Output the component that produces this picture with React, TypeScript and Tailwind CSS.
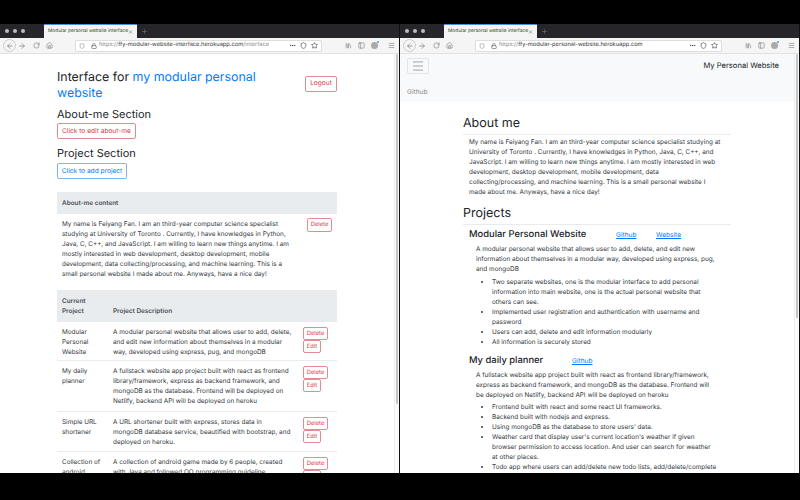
import type { ReactNode } from "react";
import {
  ArrowLeftIcon,
  ArrowRightIcon,
  EllipsisIcon,
  HouseIcon,
  LibraryIcon,
  LockIcon,
  MenuIcon,
  PanelLeftIcon,
  PlusIcon,
  RotateCwIcon,
  ShieldIcon,
  StarIcon,
  XIcon,
} from "lucide-react";

const FONT = "font-['Inter','Liberation_Sans',sans-serif] [text-rendering:geometricPrecision]";

function OutlineButton({
  children,
  color,
  small,
  className,
}: {
  children: ReactNode;
  color: "red" | "blue";
  small?: boolean;
  className: string;
}) {
  return (
    <div
      className={`flex items-center justify-center whitespace-nowrap rounded-[2px] border leading-none ${
        small ? "text-[5.8px]" : "text-[6.6px]"
      } ${color === "red" ? "border-[#e58a95] text-[#dc3545]" : "border-[#7db4f5] text-[#007bff]"} ${className}`}
    >
      {children}
    </div>
  );
}

function BrowserWindow({
  host,
  path,
  thumbHeight,
  children,
}: {
  host: string;
  path?: string;
  thumbHeight: string;
  children: ReactNode;
}) {
  return (
    <div className="flex h-full w-[400px] shrink-0 flex-col border-r border-[#111] bg-white">
      <div className="flex h-[14px] shrink-0 items-center bg-[#26262a]">
        <div className="flex w-[44px] gap-[4px] pl-[5px]">
          <span className="h-[4px] w-[4px] rounded-full bg-[#bbb]" />
          <span className="h-[4px] w-[4px] rounded-full bg-[#bbb]" />
          <span className="h-[4px] w-[4px] rounded-full bg-[#bbb]" />
        </div>
        <div className="flex h-full w-[93px] items-center justify-between border-t border-[#4a90d9] bg-[#f5f5f6] pl-[4px] pr-[4px] text-[4.8px] text-[#333]">
          <span className="whitespace-nowrap">Modular personal website interface</span>
          <XIcon className="h-[6px] w-[6px]" />
        </div>
        <PlusIcon className="ml-[4px] h-[7px] w-[7px] text-[#777]" />
      </div>
      <div className="flex h-[16px] shrink-0 items-center border-b border-[#e2e2e2] bg-[#f5f5f6] text-[#777]">
        <div className="ml-[3px] flex h-[13px] w-[13px] items-center justify-center rounded-full border border-[#ccc]">
          <ArrowLeftIcon className="h-[8px] w-[8px]" />
        </div>
        <ArrowRightIcon className="ml-[2px] h-[8px] w-[8px]" />
        <RotateCwIcon className="ml-[7px] h-[7px] w-[7px]" />
        <HouseIcon className="ml-[6px] h-[7px] w-[7px]" />
        <div className="ml-[22px] flex h-[12px] w-[247px] items-center rounded-[2px] border border-[#ddd] bg-white pl-[3px] pr-[3px] text-[5.7px]">
          <ShieldIcon className="h-[6px] w-[6px]" />
          <LockIcon className="ml-[6px] h-[6px] w-[6px] text-[#444]" />
          <span className="ml-[2px] whitespace-nowrap">
            <span className="text-[#888]">https://</span>
            <span className="text-[#333]">{host}</span>
            <span className="text-[#888]">{path}</span>
          </span>
          <div className="ml-auto flex items-center gap-[4px] text-[#333]">
            <EllipsisIcon className="h-[7px] w-[7px]" />
            <ShieldIcon className="h-[7px] w-[7px]" />
            <StarIcon className="h-[7px] w-[7px]" />
          </div>
        </div>
        <LibraryIcon className="ml-[23px] h-[7px] w-[7px]" />
        <PanelLeftIcon className="ml-[6px] h-[7px] w-[7px]" />
        <div className="relative ml-[6px] h-[7px] w-[7px] rounded-full bg-[#aaa]">
          <span className="absolute -right-[1px] -top-[1px] h-[2px] w-[2px] rounded-full bg-[#3ba7e0]" />
        </div>
        <MenuIcon className="ml-[10px] h-[7px] w-[7px]" />
      </div>
      <div className="flex min-h-0 flex-1">
        <div className="min-w-0 flex-1 overflow-hidden">{children}</div>
        <div className="w-[5px] shrink-0 border-l border-[#eee] bg-[#fafafa] pl-[1px] pr-[1px]">
          <div className={`w-full rounded-full bg-[#c4c4c4] ${thumbHeight}`} />
        </div>
      </div>
    </div>
  );
}

const PROJECT_ROWS = [
  {
    name: ["Modular", "Personal", "Website"],
    desc: "A modular personal website that allows user to add, delete, and edit new information about themselves in a modular way, developed using express, pug, and mongoDB",
    height: "h-[39px]",
  },
  {
    name: ["My daily", "planner"],
    desc: "A fullstack website app project built with react as frontend library/framework, express as backend framework, and mongoDB as the database. Frontend will be deployed on Netlify, backend API will be deployed on heroku",
    height: "h-[51px]",
  },
  {
    name: ["Simple URL", "shortener"],
    desc: "A URL shortener built with express, stores data in\nmongoDB database service, beautified with bootstrap, and deployed on heroku.",
    height: "h-[40px]",
  },
  {
    name: ["Collection of", "android"],
    desc: "A collection of android game made by 6 people, created with Java and followed OO programming guideline",
    height: "h-[40px]",
  },
];

function InterfacePage() {
  return (
    <div className="ml-[57px] w-[280px] pt-[15px] text-[6.4px] leading-[10px] text-[#33383d]">
      <div className="flex items-center justify-between">
        <h1 className="w-[215px] text-[12.4px] leading-[16px] text-[#212529]">
          Interface for <span className="text-[#007bff]">my modular personal website</span>
        </h1>
        <OutlineButton color="red" className="mt-[-3px] h-[16px] w-[32px]">
          Logout
        </OutlineButton>
      </div>
      <h2 className="mt-[6px] text-[11px] leading-[14px] text-[#212529]">About-me Section</h2>
      <OutlineButton color="red" className="mt-[2px] h-[16px] w-[79px]">
        Click to edit about-me
      </OutlineButton>
      <h2 className="mt-[7px] text-[11px] leading-[14px] text-[#212529]">Project Section</h2>
      <OutlineButton color="blue" className="mt-[3px] h-[16px] w-[70px]">
        Click to add project
      </OutlineButton>

      <div className="mt-[13px] flex h-[22px] items-center bg-[#e9ecef] pl-[5px] font-semibold text-[#495057]">
        About-me content
      </div>
      <div className="flex h-[76px] pl-[5px] pt-[5px]">
        <p className="w-[232px] shrink-0">
          My name is Feiyang Fan. I am an third-year computer science specialist studying at University of Toronto . Currently, I have knowledges in Python, Java, C, C++, and JavaScript. I am willing to learn new things anytime. I am mostly interested in web development, desktop development, mobile development, data collecting/processing, and machine learning. This is a small personal website I made about me. Anyways, have a nice day!
        </p>
        <OutlineButton color="red" small className="ml-[13px] mt-[-1px] h-[14px] w-[25px]">
          Delete
        </OutlineButton>
      </div>

      <div className="flex h-[32px] items-end bg-[#e9ecef] pb-[6px] pl-[5px] font-semibold text-[#495057]">
        <div className="w-[51px] shrink-0">
          Current
          <br />
          Project
        </div>
        <div>Project Description</div>
      </div>
      {PROJECT_ROWS.map((row) => (
        <div key={row.desc} className={`flex overflow-hidden border-b border-[#e9ecef] pl-[5px] pt-[5px] ${row.height}`}>
          <div className="w-[51px] shrink-0">
            {row.name.map((line) => (
              <div key={line}>{line}</div>
            ))}
          </div>
          <p className="w-[182px] shrink-0 whitespace-pre-line">{row.desc}</p>
          <div className="ml-[8px] flex flex-col items-start">
            <OutlineButton color="red" small className="h-[13px] w-[25px]">
              Delete
            </OutlineButton>
            <OutlineButton color="red" small className="h-[13px] w-[18px]">
              Edit
            </OutlineButton>
          </div>
        </div>
      ))}
    </div>
  );
}

function Bullets({ items, className }: { items: string[]; className: string }) {
  return (
    <ul className={`ml-[16px] w-[226px] list-disc text-[#33383d] ${className}`}>
      {items.map((item) => (
        <li key={item}>{item}</li>
      ))}
    </ul>
  );
}

function ProjectLink({ children, className }: { children: ReactNode; className: string }) {
  return <span className={`text-[6.6px] font-normal text-[#007bff] underline ${className}`}>{children}</span>;
}

function PersonalPage() {
  return (
    <div className="text-[6.4px] leading-[10px] text-[#33383d]">
      <div className="h-[48px] bg-[#f8f9fa] pl-[7px] pt-[4px]">
        <div className="flex items-start justify-between pr-[15px]">
          <div className="flex h-[16px] w-[22px] items-center justify-center rounded-[2px] border border-[#e4e5e6] text-[#666]">
            <MenuIcon className="h-[14px] w-[14px]" strokeWidth={1} />
          </div>
          <div className="mt-[3px] text-[7.6px] leading-[10px] text-[#212529]">My Personal Website</div>
        </div>
        <div className="mt-[13px] text-[6.6px] text-[#888]">Github</div>
      </div>
      <div className="ml-[63px] w-[268px]">
        <h2 className="mt-[14px] h-[19px] border-b border-[#e9ecef] text-[12.5px] leading-[16px] text-[#212529]">About me</h2>
        <p className="ml-[6px] mt-[2px] w-[254px]">
          My name is Feiyang Fan. I am an third-year computer science specialist studying at University of Toronto . Currently, I have knowledges in Python, Java, C, C++, and JavaScript. I am willing to learn new things anytime. I am mostly interested in web development, desktop development, mobile development, data collecting/processing, and machine learning. This is a small personal website I made about me. Anyways, have a nice day!
        </p>
        <h2 className="mt-[9px] h-[19px] border-b border-[#e9ecef] text-[12.5px] leading-[16px] text-[#212529]">Projects</h2>
        <div className="ml-[6px] mt-[3px]">
          <div className="flex items-center text-[9.4px] leading-[14px] font-medium text-[#212529]">
            <span className="w-[147px] whitespace-nowrap">Modular Personal Website</span>
            <ProjectLink className="w-[40px]">Github</ProjectLink>
            <ProjectLink className="">Website</ProjectLink>
          </div>
          <div className="ml-[7px] mt-[2px] w-[240px]">
            <p>
              A modular personal website that allows user to add, delete, and edit new information about themselves in a modular way, developed using express, pug, and mongoDB
            </p>
            <Bullets
              className="mt-[3px]"
              items={[
                "Two separate websites, one is the modular interface to add personal information into main website, one is the actual personal website that others can see.",
                "Implemented user registration and authentication with username and password",
                "Users can add, delete and edit information modularly",
                "All information is securely stored",
              ]}
            />
          </div>
          <div className="mt-[7px] flex items-center text-[9.4px] leading-[14px] font-medium text-[#212529]">
            <span className="w-[103px] whitespace-nowrap">My daily planner</span>
            <ProjectLink className="">Github</ProjectLink>
          </div>
          <div className="ml-[7px] mt-[2px] w-[240px]">
            <p>
              A fullstack website app project built with react as frontend library/framework, express as backend framework, and mongoDB as the database. Frontend will be deployed on Netlify, backend API will be deployed on heroku
            </p>
            <Bullets
              className="mt-[2px]"
              items={[
                "Frontend built with react and some react UI frameworks.",
                "Backend built with nodejs and express.",
                "Using mongoDB as the database to store users' data.",
                "Weather card that display user's current location's weather if given browser permission to access location. And user can search for weather at other places.",
                "Todo app where users can add/delete new todo lists, add/delete/complete",
              ]}
            />
          </div>
        </div>
      </div>
    </div>
  );
}

export default function App() {
  return (
    <div className={`flex h-[500px] w-[800px] overflow-hidden bg-black pb-[27px] pt-[24px] ${FONT}`}>
      <BrowserWindow
        host="ffy-modular-website-interface.herokuapp.com"
        path="/interface"
        thumbHeight="h-[350px]"
      >
        <InterfacePage />
      </BrowserWindow>
      <BrowserWindow host="ffy-modular-personal-website.herokuapp.com" thumbHeight="h-[264px]">
        <PersonalPage />
      </BrowserWindow>
    </div>
  );
}
